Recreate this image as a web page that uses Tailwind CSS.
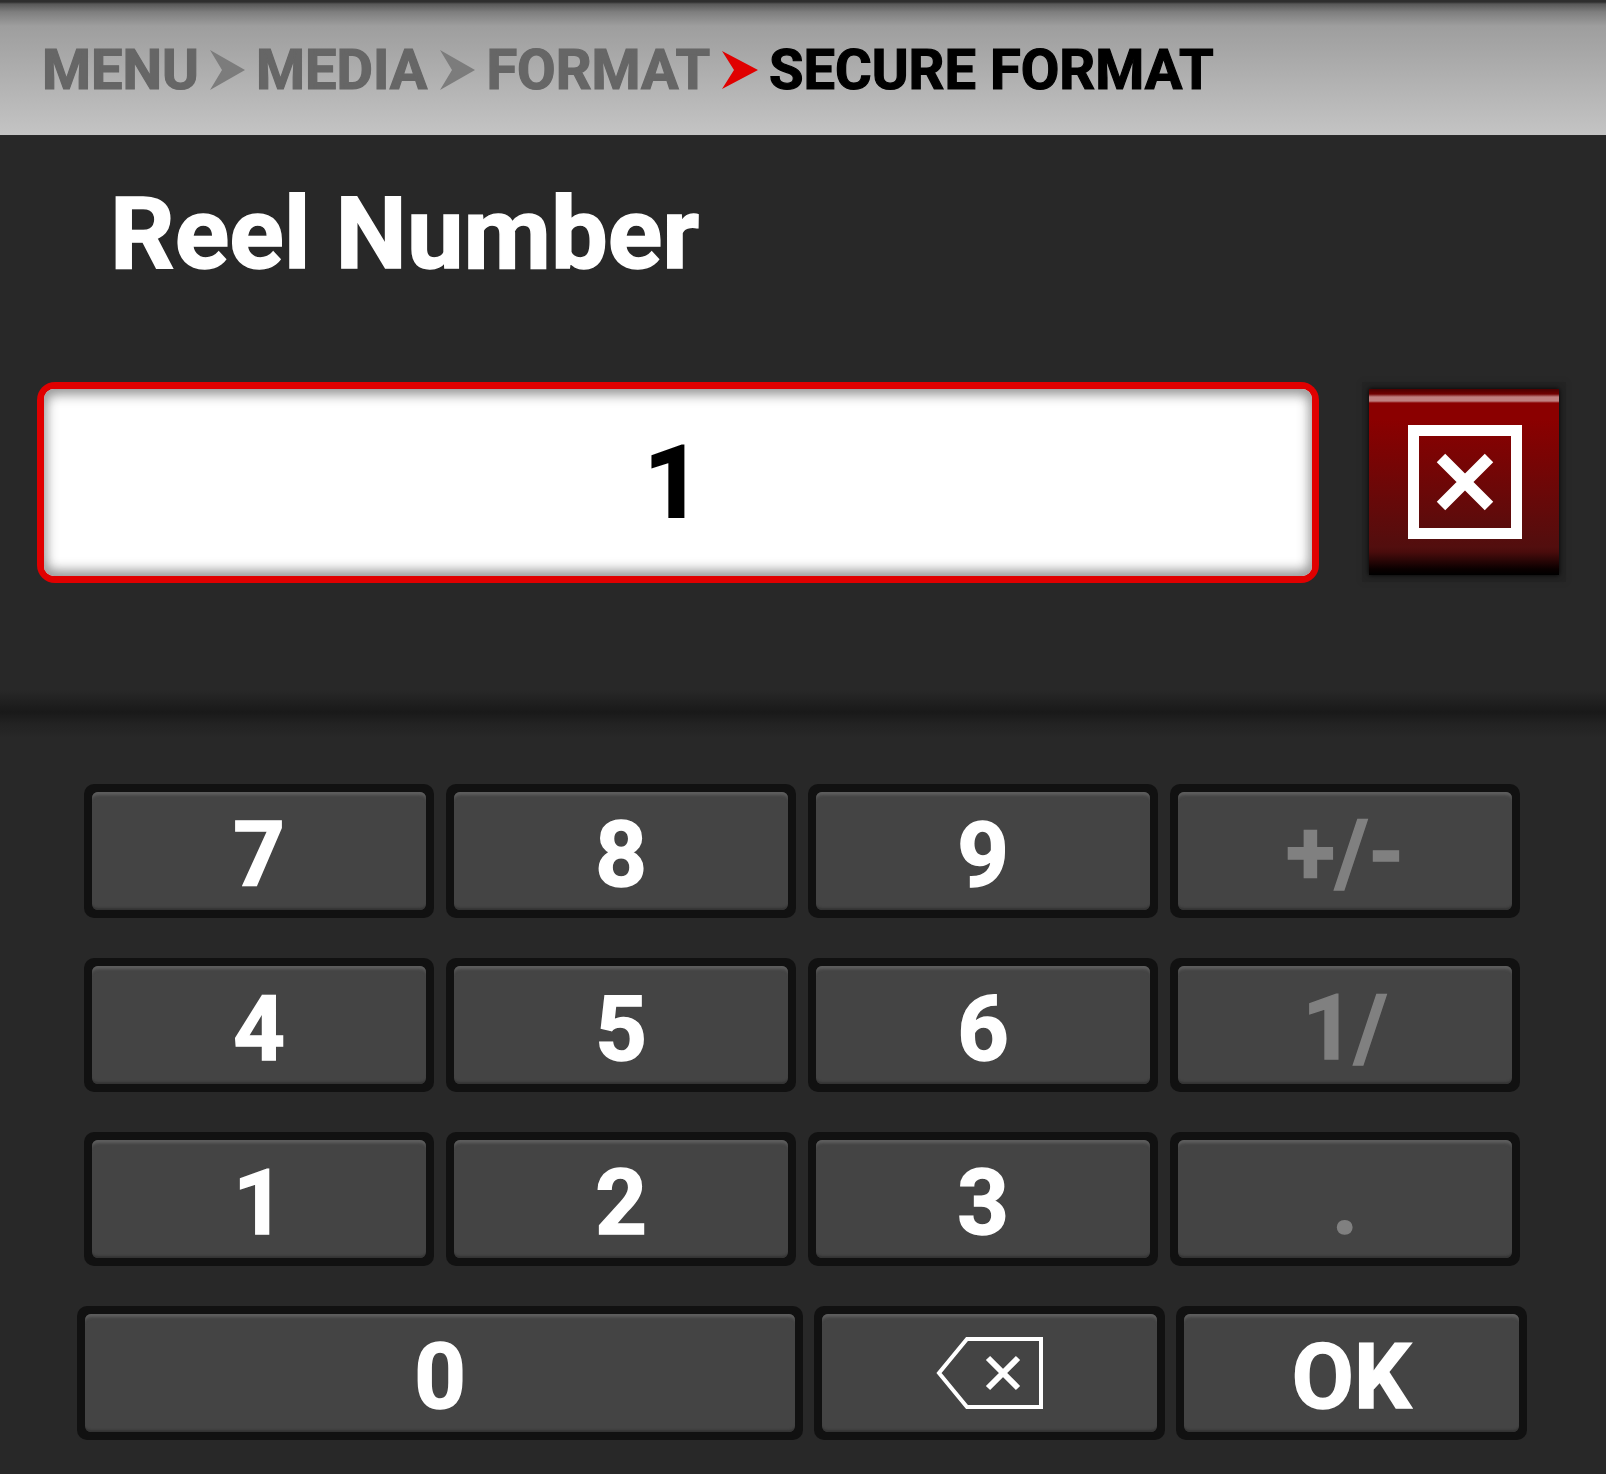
<!DOCTYPE html>
<html lang="en">
  <head>
    <meta charset="UTF-8" />
    <title>Reel Number</title>
    <script src="https://cdn.jsdelivr.net/npm/@tailwindcss/browser@4"></script>
  </head>
  <body class="w-[1606px] h-[1474px] overflow-hidden bg-[#282828] font-['Roboto',sans-serif] font-bold">
    <!-- Breadcrumb -->
    <header class="flex h-[136px] items-center pl-[42px] pt-[5px] text-[56px] leading-none [-webkit-text-stroke:1.2px_currentColor] border-b border-[#2a2a2a] bg-[linear-gradient(#2e2e2e_0px,#2e2e2e_2px,#585858_4px,#7e7e7e_12px,#9e9e9e_26px,#c4c4c4_100%)]">
      <span class="text-[#666666]">MENU</span>
      <svg class="ml-[11px] mr-[11px]" width="35" height="40" viewBox="0 0 35 40"><polygon points="0,0 35,20 0,40 12,20" fill="#7c7c7c" /></svg>
      <span class="text-[#666666]">MEDIA</span>
      <svg class="ml-[13px] mr-[11px]" width="35" height="40" viewBox="0 0 35 40"><polygon points="0,0 35,20 0,40 12,20" fill="#7c7c7c" /></svg>
      <span class="text-[#666666]">FORMAT</span>
      <svg class="ml-[12px] mr-[11px]" width="36" height="38" viewBox="0 0 36 38"><polygon points="0,0 36,19 0,38 12,19" fill="#e00000" /></svg>
      <span class="text-black">SECURE FORMAT</span>
    </header>

    <h1 class="pl-[110px] pt-[43px] text-[101px] leading-[110px] text-white [-webkit-text-stroke:1.5px_currentColor]">Reel Number</h1>

    <!-- Input row -->
    <div class="mt-[93px] flex h-[201px] pl-[37px]">
      <div class="flex h-[201px] w-[1282px] items-center justify-center rounded-[18px] bg-[#e00000] p-[7px]">
        <div class="flex h-full w-full items-center justify-center rounded-[10px] bg-white pr-[10px] text-[100px] leading-none text-black [-webkit-text-stroke:2px_currentColor] shadow-[inset_0_10px_12px_-4px_#9c9c9c,inset_0_-10px_12px_-4px_#9c9c9c,inset_9px_0_12px_-5px_#bcbcbc,inset_-9px_0_12px_-5px_#bcbcbc]">1</div>
      </div>
      <div class="ml-[43px] h-[200px] w-[204px] bg-[#232323] p-[7px] shadow-[0_0_4px_#262626]">
        <button class="flex h-full w-full items-center justify-center bg-[linear-gradient(#4a0000_0px,#700000_5px,#c08080_8px,#c08080_12px,#8b0000_14px,#8b0000_30px,#520e0e_158px,#4a0c0c_163px,#0a0000_180px,#000000_100%)] shadow-[0_0_5px_#000]">
          <svg class="ml-[2px]" width="114" height="114" viewBox="0 0 114 114" fill="none" stroke="white">
            <rect x="5.5" y="5.5" width="103" height="103" stroke-width="11" />
            <path d="M33 33L81 81M81 33L33 81" stroke-width="12" />
          </svg>
        </button>
      </div>
    </div>

    <!-- Separator shadow -->
    <div class="mt-[107px] h-[48px] bg-[linear-gradient(#282828,#191919_46%,#222222_70%,#282828)]"></div>

    <!-- Keypad -->
    <div class="mt-[46px] ml-[84px] grid w-[1436px] grid-cols-4 gap-x-3 gap-y-10 text-[90px] leading-none text-white [-webkit-text-stroke:1.5px_currentColor]">
      <button class="h-[134px] rounded-[10px] bg-[#111111] p-2"><span class="flex h-full items-center justify-center rounded-md bg-[#444444] pt-[10px] shadow-[inset_0_5px_3px_-2px_#5e5e5e,inset_0_-4px_2px_-2px_#333333]">7</span></button>
      <button class="h-[134px] rounded-[10px] bg-[#111111] p-2"><span class="flex h-full items-center justify-center rounded-md bg-[#444444] pt-[10px] shadow-[inset_0_5px_3px_-2px_#5e5e5e,inset_0_-4px_2px_-2px_#333333]">8</span></button>
      <button class="h-[134px] rounded-[10px] bg-[#111111] p-2"><span class="flex h-full items-center justify-center rounded-md bg-[#444444] pt-[10px] shadow-[inset_0_5px_3px_-2px_#5e5e5e,inset_0_-4px_2px_-2px_#333333]">9</span></button>
      <button class="h-[134px] rounded-[10px] bg-[#111111] p-2"><span class="flex h-full items-center justify-center rounded-md bg-[#444444] pt-[6px] text-[#808080] shadow-[inset_0_5px_3px_-2px_#5e5e5e,inset_0_-4px_2px_-2px_#333333]">+/-</span></button>
      <button class="h-[134px] rounded-[10px] bg-[#111111] p-2"><span class="flex h-full items-center justify-center rounded-md bg-[#444444] pt-[10px] shadow-[inset_0_5px_3px_-2px_#5e5e5e,inset_0_-4px_2px_-2px_#333333]">4</span></button>
      <button class="h-[134px] rounded-[10px] bg-[#111111] p-2"><span class="flex h-full items-center justify-center rounded-md bg-[#444444] pt-[10px] shadow-[inset_0_5px_3px_-2px_#5e5e5e,inset_0_-4px_2px_-2px_#333333]">5</span></button>
      <button class="h-[134px] rounded-[10px] bg-[#111111] p-2"><span class="flex h-full items-center justify-center rounded-md bg-[#444444] pt-[10px] shadow-[inset_0_5px_3px_-2px_#5e5e5e,inset_0_-4px_2px_-2px_#333333]">6</span></button>
      <button class="h-[134px] rounded-[10px] bg-[#111111] p-2"><span class="flex h-full items-center justify-center rounded-md bg-[#444444] pt-[8px] text-[#808080] shadow-[inset_0_5px_3px_-2px_#5e5e5e,inset_0_-4px_2px_-2px_#333333]">1/</span></button>
      <button class="h-[134px] rounded-[10px] bg-[#111111] p-2"><span class="flex h-full items-center justify-center rounded-md bg-[#444444] pt-[10px] shadow-[inset_0_5px_3px_-2px_#5e5e5e,inset_0_-4px_2px_-2px_#333333]">1</span></button>
      <button class="h-[134px] rounded-[10px] bg-[#111111] p-2"><span class="flex h-full items-center justify-center rounded-md bg-[#444444] pt-[10px] shadow-[inset_0_5px_3px_-2px_#5e5e5e,inset_0_-4px_2px_-2px_#333333]">2</span></button>
      <button class="h-[134px] rounded-[10px] bg-[#111111] p-2"><span class="flex h-full items-center justify-center rounded-md bg-[#444444] pt-[10px] shadow-[inset_0_5px_3px_-2px_#5e5e5e,inset_0_-4px_2px_-2px_#333333]">3</span></button>
      <button class="h-[134px] rounded-[10px] bg-[#111111] p-2"><span class="flex h-full items-center justify-center rounded-md bg-[#444444] pt-[10px] text-[#808080] shadow-[inset_0_5px_3px_-2px_#5e5e5e,inset_0_-4px_2px_-2px_#333333]">.</span></button>
    </div>
    <div class="mt-10 grid grid-cols-[726px_351px_351px] gap-x-[11px] pl-[77px] text-[90px] leading-none text-white [-webkit-text-stroke:1.5px_currentColor]">
      <button class="h-[134px] rounded-[10px] bg-[#111111] p-2"><span class="flex h-full items-center justify-center rounded-md bg-[#444444] pt-[10px] shadow-[inset_0_5px_3px_-2px_#5e5e5e,inset_0_-4px_2px_-2px_#333333]">0</span></button>
      <button class="h-[134px] rounded-[10px] bg-[#111111] p-2">
        <span class="flex h-full items-center justify-center rounded-md bg-[#444444] shadow-[inset_0_5px_3px_-2px_#5e5e5e,inset_0_-4px_2px_-2px_#333333]">
          <svg width="108" height="72" viewBox="0 0 108 72" fill="none" stroke="white">
            <path d="M31 2H105V70H31L3 36Z" stroke-width="4" />
            <path d="M52 21L82 51M82 21L52 51" stroke-width="6" />
          </svg>
        </span>
      </button>
      <button class="h-[134px] rounded-[10px] bg-[#111111] p-2"><span class="flex h-full items-center justify-center rounded-md bg-[#444444] pt-[10px] shadow-[inset_0_5px_3px_-2px_#5e5e5e,inset_0_-4px_2px_-2px_#333333]">OK</span></button>
    </div>
  </body>
</html>
